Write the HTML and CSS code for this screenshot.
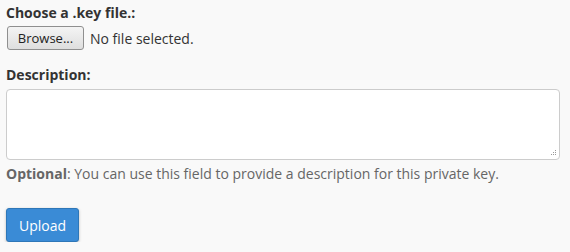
FILE: index.html
```html
<!DOCTYPE html>
<html>
<head>
<meta charset="utf-8">
<link rel="stylesheet" href="styles.css">
</head>
<body>
<form class="form">
  <div class="group">
    <label class="label">Choose a .key file.:</label>
    <div class="file-row">
      <span class="browse">Browse...</span>
      <span class="file-name">No file selected.</span>
    </div>
  </div>
  <div class="group">
    <label class="label">Description:</label>
    <div class="textarea">
      <svg class="grip" width="7" height="7" viewBox="0 0 7 7"><rect x="5" y="0" width="1" height="1"/><rect x="3" y="2" width="1" height="1"/><rect x="5" y="2" width="1" height="1"/><rect x="1" y="4" width="1" height="1"/><rect x="3" y="4" width="1" height="1"/><rect x="5" y="4" width="1" height="1"/></svg>
    </div>
    <p class="help"><strong>Optional</strong>: You can use this field to provide a description for this private key.</p>
  </div>
  <button type="button" class="upload">Upload</button>
</form>
</body>
</html>
```
FILE: styles.css
```css
html, body {
  margin: 0;
  padding: 0;
  background: #f9f9f9;
}
body {
  font-family: "Open Sans", sans-serif;
  font-size: 14px;
  color: #333;
}
.form {
  padding: 0 6px;
}
.group {
  display: flex;
  flex-direction: column;
}
.label {
  font-weight: bold;
  line-height: 20px;
  padding-top: 3px;
  color: #333;
}
.file-row {
  display: flex;
  align-items: center;
  gap: 6px;
  margin-top: 3px;
  margin-bottom: 12px;
  padding-left: 1px;
}
.browse {
  box-sizing: border-box;
  width: 77px;
  height: 24px;
  border: 1px solid #8f8f8f;
  border-radius: 3px;
  background: linear-gradient(#f4f4f4, #dedede);
  color: #222;
  font-size: 13px;
  line-height: 22px;
  text-align: center;
}
.file-name {
  color: #333;
}
.textarea {
  box-sizing: border-box;
  margin-top: 4px;
  width: 554px;
  height: 71px;
  background: #fff;
  border: 1px solid #ccc;
  border-radius: 4px;
  position: relative;
}
.grip {
  position: absolute;
  right: 2px;
  bottom: 2px;
  fill: #999;
}
.help {
  margin: 4px 0 0;
  color: #666;
  line-height: 20px;
}
.help strong {
  color: #666;
}
.upload {
  margin-top: 24px;
  box-sizing: border-box;
  width: 73px;
  height: 34px;
  background: #3a8bd6;
  border: 1px solid #2e77b8;
  border-radius: 3px;
  color: #fff;
  font-family: "Open Sans", sans-serif;
  font-size: 14px;
  box-shadow: 0 1px 3px rgba(0,0,0,0.25);
  padding: 0;
}
```
